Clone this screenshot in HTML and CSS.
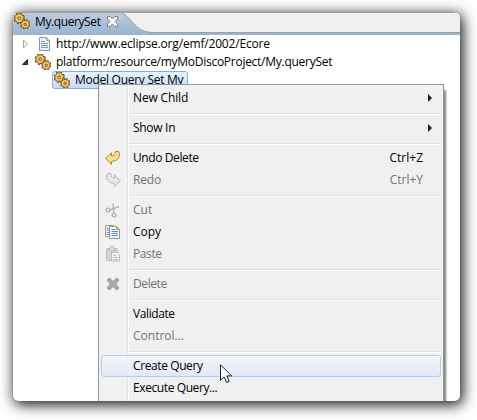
FILE: index.html
```html
<!DOCTYPE html>
<html lang="en">
<head>
<meta charset="utf-8">
<title>My.querySet</title>
<link rel="stylesheet" href="styles.css">
</head>
<body>
<svg class="defs" width="0" height="0">
  <defs>
    <linearGradient id="tabfill" x1="0" y1="0" x2="0" y2="1"><stop offset="0" stop-color="#bfcddd"/><stop offset="1" stop-color="#99b4d1"/></linearGradient>
    <symbol id="gears" viewBox="0 0 16 16">
      <g fill="none">
        <circle cx="5.2" cy="5.2" r="4.4" stroke="#6b4526" stroke-width="2.6" stroke-dasharray="2.1 1.356"/>
        <circle cx="5.2" cy="5.2" r="2.8" stroke="#805426" stroke-width="3.8"/>
        <circle cx="5.2" cy="5.2" r="4" stroke="#e3b04e" stroke-width="1.6" stroke-dasharray="1 2.142" stroke-dashoffset="-.5"/>
        <circle cx="5.2" cy="5.2" r="2.7" stroke="#f2c964" stroke-width="2"/>
        <circle cx="5.2" cy="5.2" r="1.2" fill="#fff" stroke="#805426" stroke-width=".9"/>
        <circle cx="11.2" cy="11.2" r="4" stroke="#6b4526" stroke-width="2.4" stroke-dasharray="1.8 1.342"/>
        <circle cx="11.2" cy="11.2" r="2.6" stroke="#805426" stroke-width="3.4"/>
        <circle cx="11.2" cy="11.2" r="3.6" stroke="#e3b04e" stroke-width="1.5" stroke-dasharray=".9 1.927" stroke-dashoffset="-.4"/>
        <circle cx="11.2" cy="11.2" r="2.4" stroke="#f2c964" stroke-width="1.8"/>
        <circle cx="11.2" cy="11.2" r="1" fill="#fff" stroke="#805426" stroke-width=".9"/>
      </g>
    </symbol>
    <symbol id="back" viewBox="0 0 16 16">
      <path d="M.6 8.5 6.5 2.8V6C9 6 10.3 4.5 10.3 1.5H13.8C16 6.5 13 11.3 6.5 11.3V14.4Z" stroke-linejoin="round"/>
    </symbol>
  </defs>
</svg>
<main class="window">
  <header class="tabs">
    <svg class="tabshape" width="150" height="23" viewBox="0 0 150 23"><path d="M0 0H106C117 0 120 20 138 20.5H150V23H0Z" fill="url(#tabfill)"/><path d="M0 .5H106C117 .5 120 20 138 20.5H150" fill="none" stroke="#a0a0a0"/></svg>
    <div class="tab">
      <svg class="tabicon" width="16" height="16"><use href="#gears"/></svg>
      <span class="title">My.querySet</span>
      <svg class="close" width="11" height="11" viewBox="0 0 11 11"><path d="M.5.5H3L5.5 3 8 .5H10.5V3L8 5.5 10.5 8V10.5H8L5.5 8 3 10.5H.5V8L3 5.5.5 3Z" fill="#fff" stroke="#747b83"/></svg>
    </div>
  </header>
  <section class="tree">
    <div class="node">
      <svg class="twist" width="8" height="10" viewBox="0 0 8 10"><path d="M1.5 1V9L5.5 5Z" fill="#fff" stroke="#a6a6a6"/></svg>
      <svg width="16" height="16" viewBox="0 0 16 16"><path d="M2.5 1.5H9.5L12.5 4.5V14.5H2.5Z" fill="#e9f2fc" stroke="#8096ae"/><path d="M9.5 1.5V4.5H12.5" fill="#e5ca83" stroke="#b9a46c"/><path d="M4 5.5H8M4 7.5H11M4 9.5H11M4 11.5H11" stroke="#7797c9"/></svg>
      <span class="url">http://www.eclipse.org/emf/2002/Ecore</span>
    </div>
    <div class="node">
      <svg class="twist" width="8" height="10" viewBox="0 0 8 10"><path d="M5.5 2.5V7.5H.5Z" fill="#404040" stroke="#262626"/></svg>
      <svg class="rooticon" width="16" height="16"><use href="#gears"/></svg>
      <span class="platform">platform:/resource/myMoDiscoProject/My.querySet</span>
    </div>
    <div class="node selected">
      <svg width="16" height="16"><use href="#gears"/></svg>
      <span class="model">Model Query Set My</span>
    </div>
  </section>
  <nav class="menu">
    <div class="item"><span class="i"></span><span class="l newchild">New Child</span><svg class="arrow" width="4" height="8"><path d="M0 0 4 4 0 8Z" fill="#202020"/></svg></div>
    <hr>
    <div class="item"><span class="i"></span><span class="l showin">Show In</span><svg class="arrow" width="4" height="8"><path d="M0 0 4 4 0 8Z" fill="#202020"/></svg></div>
    <hr>
    <div class="item"><span class="i"><svg width="16" height="16" fill="#fae08c" stroke="#b98527"><use href="#back"/></svg></span><span class="l undo">Undo Delete</span><span class="key">Ctrl+Z</span></div>
    <div class="item off"><span class="i"><svg class="flip" width="16" height="16" fill="#e7e7e7" stroke="#b8b8b8"><use href="#back"/></svg></span><span class="l redo">Redo</span><span class="key">Ctrl+Y</span></div>
    <hr>
    <div class="item off"><span class="i"><svg width="16" height="16" viewBox="0 0 16 16" fill="none" stroke="#b4b4b4" stroke-width="1.4"><circle cx="3" cy="8" r="1.9"/><circle cx="9" cy="13" r="1.9"/><path d="M5 8 14 4.5M8.7 11 8 1.5"/></svg></span><span class="l">Cut</span></div>
    <div class="item"><span class="i"><svg width="16" height="16" viewBox="0 0 16 16"><path d="M.5 1.5H8.5V12.5H.5Z" fill="#eef4fc" stroke="#b39c61"/><path d="M2 4.5H5M2 6.5H5M2 8.5H5M2 10.5H5" stroke="#668cc5"/><path d="M4.5 2.5H11.5L14.5 5.5V14.5H4.5Z" fill="#f2f7fe" stroke="#7f96b8"/><path d="M11.5 2.5V5.5H14.5Z" fill="#e5c878" stroke="#b79a55"/><path d="M6.5 5.5H10M6.5 7.5H13M6.5 9.5H13M6.5 11.5H13" stroke="#668cc5"/></svg></span><span class="l">Copy</span></div>
    <div class="item off"><span class="i"><svg width="16" height="16" viewBox="0 0 16 16"><rect x="1.5" y="2.5" width="11" height="12" rx="1" fill="#d3d3d3" stroke="#bdbdbd"/><path d="M4 4.5V2.5H5.5V.5H8.5V2.5H10V4.5Z" fill="#e5e5e5" stroke="#b8b8b8"/><path d="M6.5 6.5H12L14.5 9V15H6.5Z" fill="#f3f3f3" stroke="#bbb"/><path d="M8 9.5H11M8 11.5H13M8 13.5H13" stroke="#c1c1c1"/></svg></span><span class="l paste">Paste</span></div>
    <hr>
    <div class="item off"><span class="i"><svg width="16" height="16" viewBox="0 0 16 16"><path d="M2 4 4.5 2 8 5.5 11.5 2 14 4 10.7 8 14 12 11.5 14 8 10.5 4.5 14 2 12 5.3 8Z" fill="#a9a9a9" stroke="#989898" stroke-linejoin="round"/></svg></span><span class="l delete">Delete</span></div>
    <hr>
    <div class="item"><span class="i"></span><span class="l validate">Validate</span></div>
    <div class="item off"><span class="i"></span><span class="l control">Control...</span></div>
    <hr>
    <div class="item hot"><span class="i"></span><span class="l create">Create Query</span></div>
    <div class="item"><span class="i"></span><span class="l execute">Execute Query...</span></div>
  </nav>
</main>
<svg class="cursor" width="13" height="20" viewBox="0 0 13 20"><path d="M.5.8V16.3L4.1 12.9 6.6 18.5 9.2 17.4 6.8 11.9H11.6Z" fill="#fff" stroke="#1b1e2c"/></svg>
</body>
</html>
```
FILE: styles.css
```css
* { box-sizing: border-box; }
body {
  margin: 0;
  width: 477px;
  height: 420px;
  padding: 12px 0 0 13px;
  overflow: hidden;
  background: #fff;
  color: #000;
  font: 12px/16px "Open Sans", "Noto Sans", sans-serif;
  white-space: nowrap;
}
svg { display: block; flex: none; }
.defs { position: absolute; }
.window {
  position: relative;
  width: 447px;
  height: 389px;
  overflow: hidden;
  border-radius: 6px;
  background: #fff;
}
body::before {
  content: "";
  position: absolute;
  left: 13px;
  top: 12px;
  width: 447px;
  height: 389px;
  border-radius: 6px;
  box-shadow: 0 0 1px #555, 2px 3px 14px 1px rgba(0, 0, 0, .9);
}
.tabs {
  position: relative;
  height: 23px;
  background: linear-gradient(#a0a0a0 1px, #f0f0f0 1px 20px, #a0a0a0 20px 21px, #99b4d1 21px);
}
.tabshape { position: absolute; left: 0; top: 0; }
.tab {
  position: relative;
  display: flex;
  align-items: center;
  height: 19px;
  padding-left: 1px;
}
.tabicon { margin-bottom: 2px; }
.title { width: 73px; margin-left: 5px; padding-top: 1px; letter-spacing: -.4px; }
.url { letter-spacing: -.17px; }
.platform { letter-spacing: -.27px; }
.model { letter-spacing: -.27px; }
.close { margin: 0 0 1px -1px; }
.tree { display: flex; flex-direction: column; }
.node {
  display: flex;
  align-items: center;
  height: 18px;
  padding-left: 9px;
  gap: 3px;
}
.node .twist { margin-right: 4px; }
.node .rooticon { margin: 0 2px 0 -2px; }
.selected {
  align-self: flex-start;
  width: 136px;
  margin-left: 39px;
  padding-left: 1px;
  border: 1px solid #84acdd;
  border-radius: 3px;
  background: linear-gradient(#eaf3fd, #c4dcf9);
  gap: 5px;
}
.menu {
  position: absolute;
  left: 85px;
  top: 72px;
  width: 346px;
  height: 330px;
  padding: 2px 1px;
  border: 1px solid #979797;
  background: linear-gradient(90deg, #f1f1f1 28px, #e2e3e3 28px 29px, #fff 29px 30px, #f0f0f0 30px);
  box-shadow: 3px 5px 2px -1px rgba(0, 0, 0, .5);
}
.menu hr {
  height: 2px;
  margin: 4px 1px 2px 29px;
  border: 0;
  background: linear-gradient(#e0e0e0 50%, #fff 50%);
}
.item {
  display: flex;
  align-items: center;
  height: 22px;
  margin-left: 1px;
  margin-right: 1px;
  border: 1px solid transparent;
  border-radius: 3px;
}
.item .i { width: 31px; padding-left: 3px; flex: none; }
.item .arrow { margin-left: auto; margin-right: 8px; }
.newchild, .redo { letter-spacing: -.15px; }
.showin { letter-spacing: -.3px; }
.undo, .create, .execute, .validate, .delete, .paste { letter-spacing: -.4px; }
.key { margin-left: auto; margin-right: 17px; }
.off { color: #747474; }
.flip { transform: scaleX(-1); }
.hot {
  border-color: #aecff7;
  background: linear-gradient(rgba(243, 246, 251, .9), rgba(226, 233, 245, .9));
}
.cursor { position: absolute; left: 220px; top: 364px; }
```
